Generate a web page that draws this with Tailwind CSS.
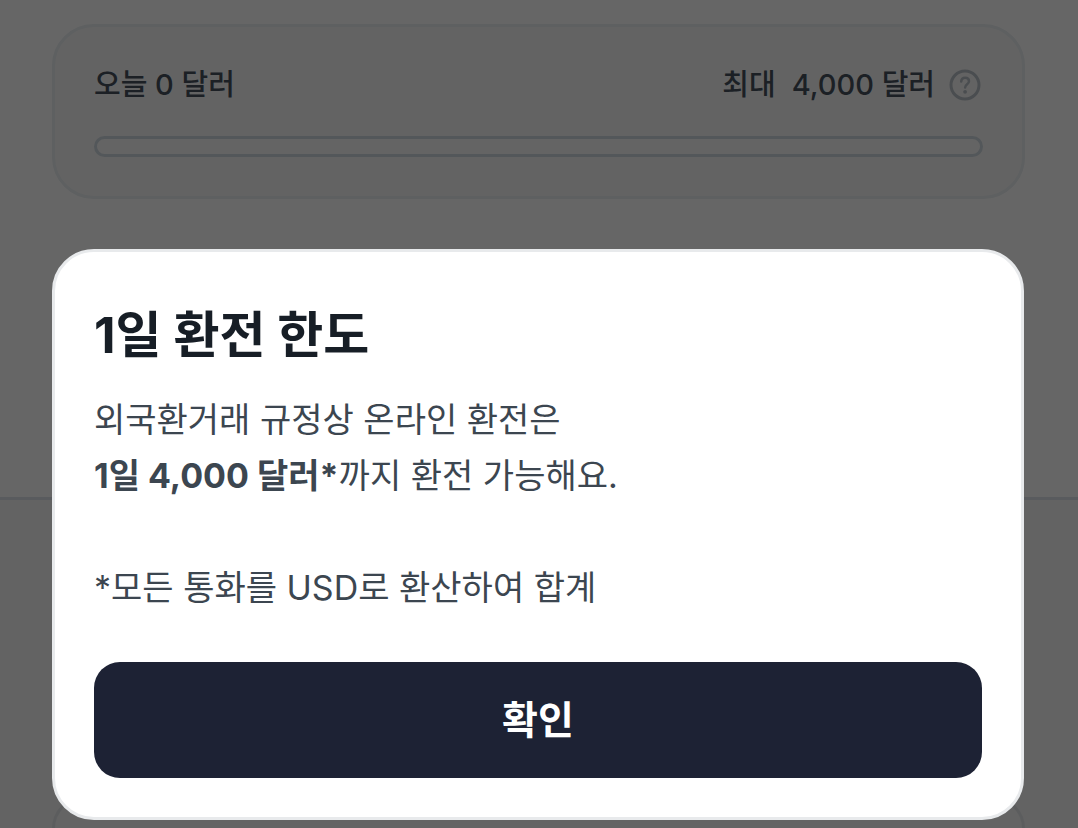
<!DOCTYPE html>
<html lang="ko">
<head>
  <meta charset="UTF-8">
  <meta name="viewport" content="width=device-width, initial-scale=1">
  <title>1일 환전 한도</title>
  <script src="https://cdn.jsdelivr.net/npm/@tailwindcss/browser@4"></script>
</head>
<body class="h-screen overflow-hidden bg-white font-[Inter,'Noto_Sans_CJK_KR',sans-serif] text-[#3c4650]">
  <main class="flex h-full flex-col">
    <!-- Daily limit -->
    <section class="shrink-0 border-b-3 border-[#dfe4ea] pt-6 pr-[53px] pb-[298px] pl-[52px]">
      <div class="rounded-[42px] border-3 border-[#eaeff2] bg-[#f8f8f8] px-[39px] pt-9 pb-[39px]">
        <div class="flex items-center justify-between text-[29px] leading-[44px] font-medium text-[#46525e]">
          <span>오늘 0 달러</span>
          <div class="flex items-center gap-4">
            <span>최대</span>
            <span>4,000 달러</span>
            <button type="button" aria-label="환전 한도 안내" class="-ml-0.5 mr-0.5">
              <svg class="size-8" viewBox="0 0 32 32" fill="none" stroke="#b9c1c7" stroke-linecap="round" stroke-linejoin="round">
                <circle cx="16" cy="16" r="14" stroke-width="3"/>
                <path d="M12.2 12.6c.2-2.400 1.700-3.800 3.900-3.800 2.300 0 3.900 1.400 3.900 3.400 0 3-3.900 3-3.900 6.300" stroke-width="2.500"/>
                <circle cx="16.100" cy="22.800" r="1.900" fill="#b9c1c7" stroke="none"/>
              </svg>
            </button>
          </div>
        </div>
        <progress value="0" max="4000" aria-label="오늘 환전한 금액" class="mt-[29px] block h-[21px] w-full appearance-none overflow-hidden rounded-full border-3 border-[#d0d9e0] bg-[#fafafa] [&::-webkit-progress-bar]:bg-transparent"></progress>
      </div>
    </section>
    <section class="flex min-h-0 grow flex-col bg-[#f7f7f7] pt-[297px] pr-[53px] pl-[52px]">
      <div class="grow rounded-t-[42px] border-3 border-b-0 border-[#e6e9ec] bg-[#f9f9f9]"></div>
    </section>
  </main>

  <!-- Limit notice -->
  <div class="fixed inset-0 flex items-end bg-black/60 pr-[54px] pb-2 pl-[52px]">
    <div role="dialog" aria-modal="true" aria-labelledby="limitTitle" class="w-full rounded-[42px] border-3 border-[#e8eaec] bg-white px-[39px] pt-[50px] pb-[39px]">
      <h1 id="limitTitle" class="mb-6 text-[50px] leading-[66px] font-bold text-[#171e26]">1일 환전 한도</h1>
      <p class="text-[34px] leading-[56px]">외국환거래 규정상 온라인 환전은<br><strong class="font-bold">1일 4,000 달러*</strong>까지 환전 가능해요.</p>
      <p class="mt-14 text-[34px] leading-[56px]">*모든 통화를 USD로 환산하여 합계</p>
      <button id="confirmBtn" type="button" class="mt-[46px] h-[116px] w-full cursor-pointer rounded-[26px] bg-[#1d2234] text-[39px] font-bold text-white">확인</button>
    </div>
  </div>
</body>
</html>
